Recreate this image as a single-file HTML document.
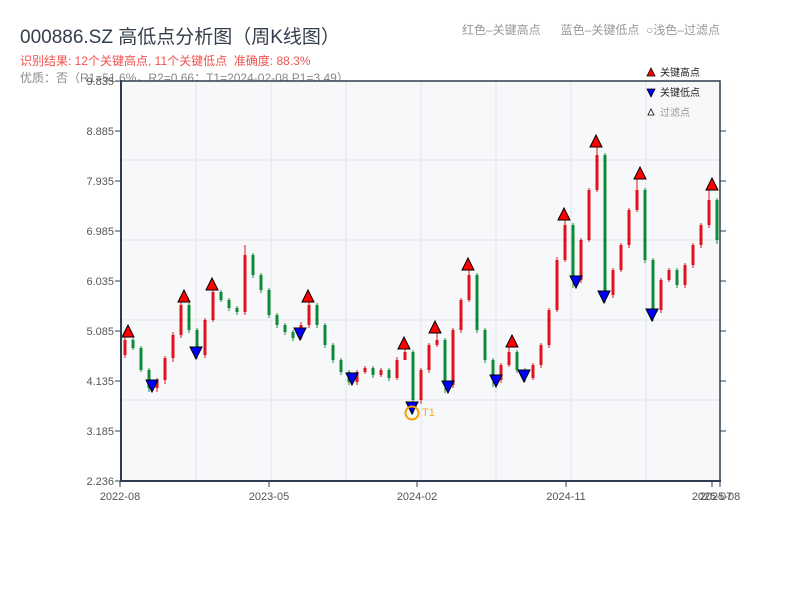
<!DOCTYPE html>
<html><head><meta charset="utf-8"><style>
body{margin:0;width:800px;height:600px;background:#fff;font-family:"Liberation Sans","Noto Sans CJK SC",sans-serif;overflow:hidden;position:relative}
.t{position:absolute;white-space:nowrap}
</style></head><body>
<div class="t" style="left:20px;top:22px;font-size:19px;color:#333d4b">000886.SZ 高低点分析图（周K线图）</div>
<div class="t" style="left:20px;top:52px;font-size:12px;color:#f0524f">识别结果: 12个关键高点, 11个关键低点&nbsp;&nbsp;准确度: 88.3%</div>
<div class="t" style="left:20px;top:69px;font-size:12px;color:#888">优质：否（R1=51.6%，R2=0.66；T1=2024-02-08 P1=3.49）</div>
<div class="t" style="left:462px;top:21px;font-size:12px;color:#999">红色–关键高点&nbsp;&nbsp;&nbsp;&nbsp;&nbsp;&nbsp;蓝色–关键低点&nbsp;&nbsp;○浅色–过滤点</div>
<svg width="800" height="600" style="position:absolute;left:0;top:0" font-family="Liberation Sans, Noto Sans CJK SC, sans-serif">
<rect x="121" y="81" width="599" height="400" fill="#f6f8fa"/>
<g stroke="#e2e5ea" stroke-width="1">
<line x1="121" x2="720" y1="160" y2="160"/><line x1="121" x2="720" y1="240" y2="240"/><line x1="121" x2="720" y1="320" y2="320"/><line x1="121" x2="720" y1="400" y2="400"/>
<line x1="196" x2="196" y1="81" y2="481"/><line x1="271" x2="271" y1="81" y2="481"/><line x1="346" x2="346" y1="81" y2="481"/><line x1="421" x2="421" y1="81" y2="481"/><line x1="496" x2="496" y1="81" y2="481"/><line x1="571" x2="571" y1="81" y2="481"/><line x1="646" x2="646" y1="81" y2="481"/>
</g>
<g font-size="11" fill="#555" text-anchor="end">
<text x="114" y="85">9.835</text><text x="114" y="135">8.885</text><text x="114" y="185">7.935</text><text x="114" y="235">6.985</text><text x="114" y="285">6.035</text><text x="114" y="335">5.085</text><text x="114" y="385">4.135</text><text x="114" y="435">3.185</text><text x="114" y="485">2.236</text>
</g>
<path stroke="#2e3d4f" d="M115 81H121M115 131H121M115 181H121M115 231H121M115 281H121M115 331H121M115 381H121M115 431H121M115 481H121M720 131H726M720 181H726M720 231H726M720 281H726M720 331H726M720 381H726M720 431H726M120 481V487M269 481V487M417 481V487M566 481V487M712 481V487M720 481V487"/>
<g font-size="11" fill="#555" text-anchor="middle">
<text x="120" y="500">2022-08</text><text x="269" y="500">2023-05</text><text x="417" y="500">2024-02</text><text x="566" y="500">2024-11</text><text x="712" y="500">2025-07</text><text x="720" y="500">2025-08</text>
</g>
<path fill="none" stroke="#e0141e" stroke-width="1" d="M125 335V358M157 378V392M165 356V384M173 332V362M181 300V338M205 318V358M213 288V322M245 245V315M301 322V340M309 300V328M357 370V385M365 366V374M381 368V377M397 357V380M405 347V354M421 368V404M429 343V373M437 333V347M453 328V388M461 298V333M469 268V302M501 363V383M509 347V367M533 363V380M541 343V368M549 308V348M557 257V312M565 220V262M581 238V283M589 188V242M597 147V192M613 268V298M621 243V272M629 208V248M637 179V212M661 278V313M669 268V282M685 263V288M693 243V268M701 223V248M709 190V228"/>
<path fill="none" stroke="#0e8a3a" stroke-width="1" d="M133 338V350M141 346V372M149 368V392M189 303V333M197 328V359M221 290V302M229 298V311M237 306V315M253 253V278M261 273V293M269 288V318M277 313V328M285 323V335M293 330V341M317 303V328M325 323V348M333 343V363M341 358V375M349 370V385M373 366V378M389 368V381M413 350V414M445 338V393M477 273V333M485 328V363M493 358V387M517 350V373M525 368V382M573 223V288M605 153V303M645 188V263M653 258V321M677 268V288M717 198V244"/>
<path fill="none" stroke="#e0141e" stroke-width="3" d="M125 340V355M157 380V388M165 358V380M173 335V358M181 305V335M205 320V355M213 292V320M245 255V312M301 325V338M309 305V325M357 372V382M365 368V372M381 370V375M397 360V378M405 352V360M421 370V400M429 345V370M437 340V345M453 330V385M461 300V330M469 275V300M501 365V380M509 352V365M533 365V378M541 345V365M549 310V345M557 260V310M565 225V260M581 240V280M589 190V240M597 155V190M613 270V295M621 245V270M629 210V245M637 190V210M661 280V310M669 270V280M685 265V285M693 245V265M701 225V245M709 200V225"/>
<path fill="none" stroke="#0e8a3a" stroke-width="3" d="M133 340V348M141 348V370M149 370V388M189 305V330M197 330V355M221 292V300M229 300V308M237 308V312M253 255V275M261 275V290M269 290V315M277 315V325M285 325V332M293 332V338M317 305V325M325 325V345M333 345V360M341 360V372M349 372V382M373 368V375M389 370V378M413 352V400M445 340V385M477 275V330M485 330V360M493 360V380M517 352V370M525 370V378M573 225V280M605 155V295M645 190V260M653 260V310M677 270V285M717 200V240"/>
<g fill="#f00" stroke="#000" stroke-width="1">
<polygon points="122,337 134,337 128,325"/><polygon points="178,302 190,302 184,290"/><polygon points="206,290 218,290 212,278"/><polygon points="302,302 314,302 308,290"/><polygon points="398,349 410,349 404,337"/><polygon points="429,333 441,333 435,321"/><polygon points="462,270 474,270 468,258"/><polygon points="506,347 518,347 512,335"/><polygon points="558,220 570,220 564,208"/><polygon points="590,147 602,147 596,135"/><polygon points="634,179 646,179 640,167"/><polygon points="706,190 718,190 712,178"/>
</g>
<g fill="#00f" stroke="#000" stroke-width="1">
<polygon points="146,380 158,380 152,392"/><polygon points="190,347 202,347 196,359"/><polygon points="294,328 306,328 300,340"/><polygon points="346,373 358,373 352,385"/><polygon points="406,402 418,402 412,414"/><polygon points="442,381 454,381 448,393"/><polygon points="490,375 502,375 496,387"/><polygon points="518,370 530,370 524,382"/><polygon points="570,276 582,276 576,288"/><polygon points="598,291 610,291 604,303"/><polygon points="646,309 658,309 652,321"/>
</g>
<circle cx="412" cy="413" r="6.5" fill="none" stroke="#f5a000" stroke-width="2"/>
<text x="422" y="416" font-size="11" fill="#f5a623">T1</text>
<path fill="none" stroke="#2e3d4f" stroke-width="1.5" d="M121 81H720V481"/>
<path fill="none" stroke="#2e3d4f" stroke-width="2" d="M121 80V481H721"/>
<polygon points="647,76 655,76 651,68" fill="#f00" stroke="#000" stroke-width="0.8"/><text x="660" y="76" font-size="10" fill="#222">关键高点</text>
<polygon points="647,89 655,89 651,97" fill="#00f" stroke="#000" stroke-width="0.8"/><text x="660" y="96" font-size="10" fill="#222">关键低点</text>
<polygon points="648,115 654,115 651,109" fill="#fff" stroke="#000" stroke-width="0.8"/><text x="660" y="116" font-size="10" fill="#999">过滤点</text>
</svg>
</body></html>
